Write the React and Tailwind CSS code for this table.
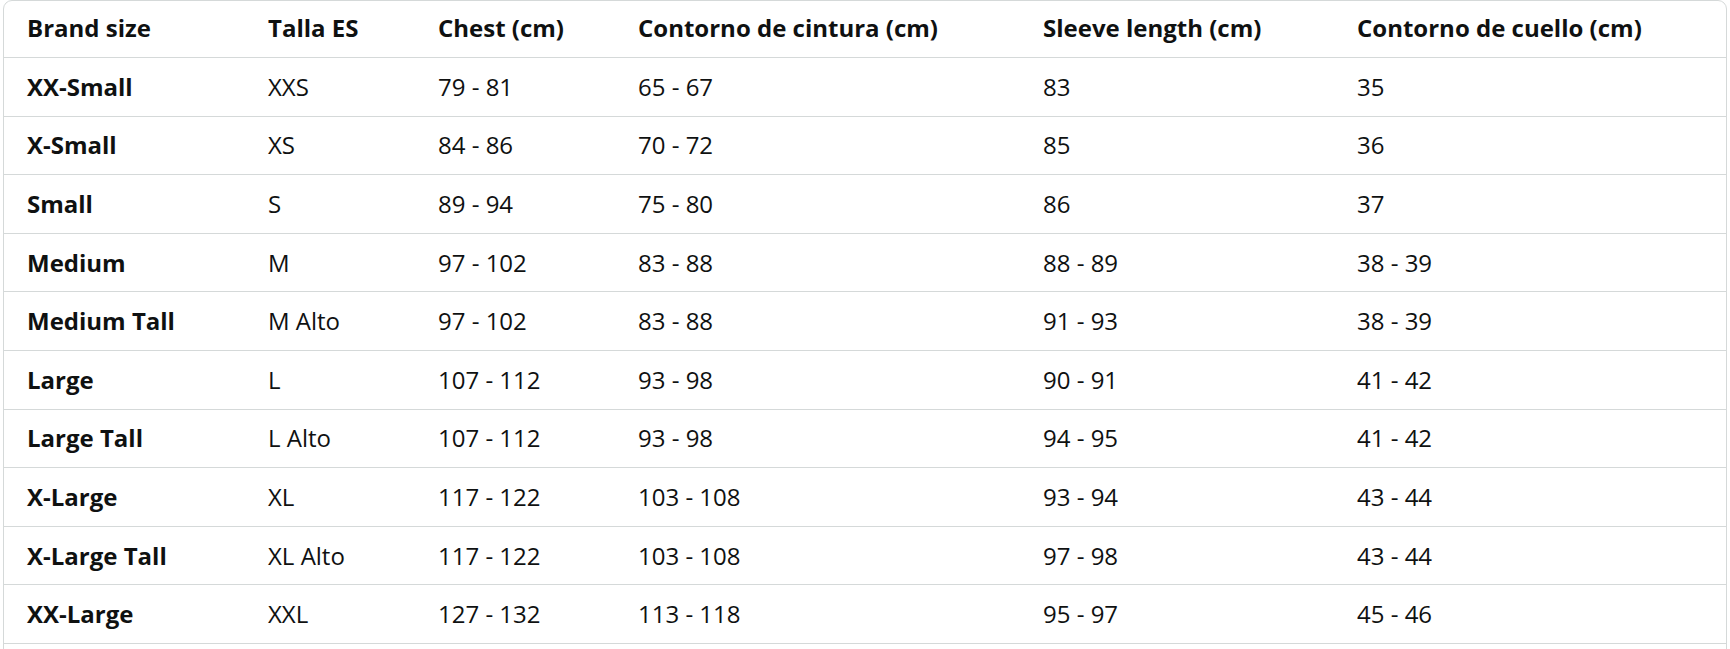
import React from "react";

const headers = [
  "Brand size",
  "Talla ES",
  "Chest (cm)",
  "Contorno de cintura (cm)",
  "Sleeve length (cm)",
  "Contorno de cuello (cm)",
];

const rows = [
  ["XX-Small", "XXS", "79 - 81", "65 - 67", "83", "35"],
  ["X-Small", "XS", "84 - 86", "70 - 72", "85", "36"],
  ["Small", "S", "89 - 94", "75 - 80", "86", "37"],
  ["Medium", "M", "97 - 102", "83 - 88", "88 - 89", "38 - 39"],
  ["Medium Tall", "M Alto", "97 - 102", "83 - 88", "91 - 93", "38 - 39"],
  ["Large", "L", "107 - 112", "93 - 98", "90 - 91", "41 - 42"],
  ["Large Tall", "L Alto", "107 - 112", "93 - 98", "94 - 95", "41 - 42"],
  ["X-Large", "XL", "117 - 122", "103 - 108", "93 - 94", "43 - 44"],
  ["X-Large Tall", "XL Alto", "117 - 122", "103 - 108", "97 - 98", "43 - 44"],
  ["XX-Large", "XXL", "127 - 132", "113 - 118", "95 - 97", "45 - 46"],
];

const cols = "grid grid-cols-[241px_170px_200px_405px_314px_392px]";

export default function App() {
  return (
    <div className="min-h-screen bg-white font-['Open_Sans','Liberation_Sans',sans-serif] text-[24px] text-[#0f1111]">
      <div className="ml-[3px] w-[1724px] rounded-t-[9px] border border-[#d5d9d9]">
        {/* header row */}
        <div className={`${cols} h-[56px] items-center pb-[3px] font-bold`}>
          {headers.map((h) => (
            <div key={h} className="pl-[23px] whitespace-nowrap">
              {h}
            </div>
          ))}
        </div>

        {/* size rows */}
        {rows.map((r) => (
          <div key={r[0]} className={`${cols} h-[58.6px] items-center border-t border-[#d5d9d9]`}>
            {r.map((c, i) => (
              <div key={i} className={`pl-[23px] whitespace-nowrap ${i === 0 ? "font-bold" : ""}`}>
                {c}
              </div>
            ))}
          </div>
        ))}

        {/* next row, cut off by the frame */}
        <div className="h-[58.6px] border-t border-[#d5d9d9]" />
      </div>
    </div>
  );
}
